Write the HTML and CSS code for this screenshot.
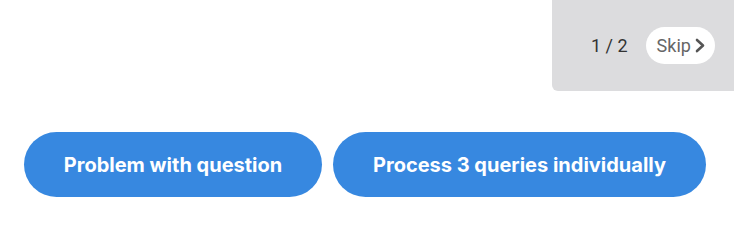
FILE: index.html
```html
<!DOCTYPE html>
<html>
<head>
<meta charset="utf-8">
<link rel="stylesheet" href="styles.css">
</head>
<body>
<div class="top">
  <div class="panel">
    <span class="count">1 / 2</span>
    <button class="skip">Skip<svg class="chev" width="10" height="15" viewBox="0 0 10 15"><path d="M2 2 L8 7.5 L2 13" fill="none" stroke="#555" stroke-width="2.6" stroke-linecap="round" stroke-linejoin="round"/></svg></button>
  </div>
</div>
<div class="actions">
  <button class="btn btn-one">Problem with question</button>
  <button class="btn btn-two">Process 3 queries individually</button>
</div>
</body>
</html>
```
FILE: styles.css
```css
html, body {
  margin: 0;
  padding: 0;
  background: #ffffff;
}
body {
  width: 734px;
  height: 241px;
  overflow: hidden;
  font-family: Inter, "Noto Sans", sans-serif;
}
.top {
  display: flex;
  justify-content: flex-end;
}
.panel {
  width: 182px;
  height: 91px;
  background: #dcdcde;
  border-bottom-left-radius: 6px;
  display: flex;
  align-items: center;
  box-sizing: border-box;
  padding-left: 39px;
  padding-bottom: 1px;
}
.count {
  font-family: Roboto, "Liberation Sans", sans-serif;
  font-size: 18px;
  color: #333333;
  margin-right: 18px;
}
.skip {
  border: none;
  background: #ffffff;
  height: 37px;
  border-radius: 19px;
  padding: 0 10px 0 11px;
  display: flex;
  align-items: center;
  gap: 4px;
  font-family: Roboto, "Liberation Sans", sans-serif;
  font-size: 18px;
  color: #666666;
}
.chev {
  display: block;
}
.actions {
  display: flex;
  gap: 11px;
  padding-left: 24px;
  margin-top: 41px;
}
.btn {
  border: none;
  height: 65px;
  border-radius: 33px;
  background: #3788e0;
  color: #ffffff;
  font-family: Inter, "Noto Sans", sans-serif;
  font-weight: 700;
  font-size: 20px;
  padding: 0;
}
.btn-one { width: 298px; }
.btn-two { width: 373px; }
```
